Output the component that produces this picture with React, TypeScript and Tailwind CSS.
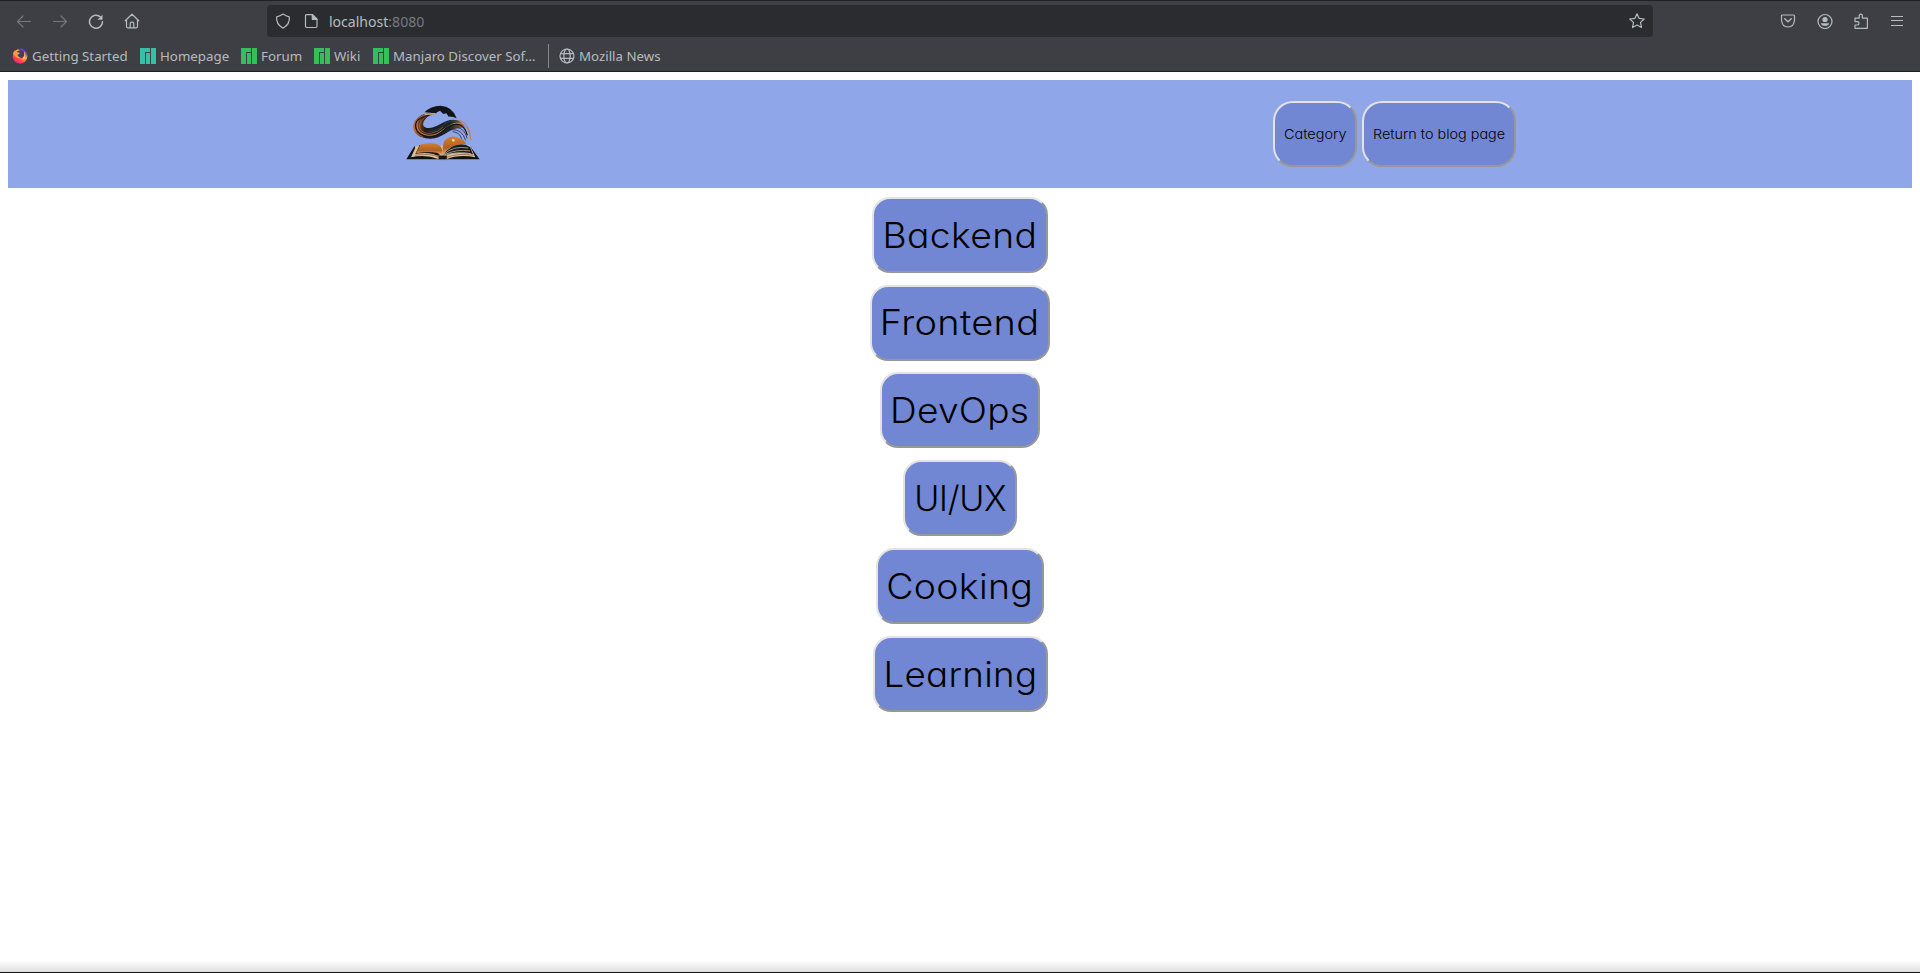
import React from "react";

const outset =
  "flex items-center justify-center border-2 border-t-[#e3e3e3] border-l-[#e3e3e3] border-r-[#979797] border-b-[#979797] bg-[#7287d3] text-black whitespace-nowrap font-[Inter,sans-serif] [font-feature-settings:'cv11','ss03']";

const categories = [
  { name: "Backend", box: "w-[176px]", text: "tracking-[0.4px] scale-x-[1.063]" },
  { name: "Frontend", box: "w-[180px]", text: "tracking-[0.3px] scale-x-[1.084]" },
  { name: "DevOps", box: "w-[160px]", text: "tracking-[0.2px] scale-x-[1.06]" },
  { name: "UI/UX", box: "w-[114px]", text: "tracking-[-0.3px] scale-x-[0.975]" },
  { name: "Cooking", box: "w-[168px]", text: "tracking-[0.3px] scale-x-[1.07]" },
  { name: "Learning", box: "w-[175px]", text: "tracking-[0.3px] scale-x-[1.048]" },
];

function Icon({ children, className = "" }: { children: React.ReactNode; className?: string }) {
  return (
    <svg
      viewBox="0 0 16 16"
      className={`h-4 w-4 shrink-0 ${className}`}
      fill="none"
      stroke="currentColor"
      strokeWidth="1.2"
      strokeLinecap="round"
      strokeLinejoin="round"
    >
      {children}
    </svg>
  );
}

function Firefox() {
  return (
    <svg viewBox="0 0 16 16" className="h-4 w-4 shrink-0">
      <defs>
        <linearGradient id="fox" x1="0.8" y1="0.1" x2="0.2" y2="0.9">
          <stop offset="0" stopColor="#ffdf50" />
          <stop offset="0.45" stopColor="#ff8a45" />
          <stop offset="0.75" stopColor="#ff4055" />
          <stop offset="1" stopColor="#e52878" />
        </linearGradient>
      </defs>
      <circle cx="8" cy="8.4" r="7.3" fill="url(#fox)" />
      <path d="M6 1.2Q11-1 14 3.5Q16 7 13.5 10Q13 6 10 4Z" fill="#7139d8" />
      <path d="M12.5 4Q14.5 7 13 11L10.5 12Q12.5 8 10 4.5Z" fill="#ffc34c" />
      <circle cx="8.4" cy="6.1" r="3.9" fill="#453b68" />
      <path d="M1 5L3 2.2L5 4.1L8 5Q7 6.5 5.3 6.8Q6 9 8.6 9.8Q4 11.5 1 5Z" fill="#ff9a42" />
    </svg>
  );
}

function Manjaro({ className }: { className: string }) {
  return (
    <svg viewBox="0 0 16 16" className={`h-4 w-4 shrink-0 ${className}`} fill="currentColor">
      <path d="M0 0H10V4H5V16H0ZM6 5H10V16H6ZM11 0H16V16H11Z" />
    </svg>
  );
}

function Globe() {
  return (
    <Icon>
      <circle cx="8" cy="8" r="7" />
      <ellipse cx="8" cy="8" rx="3.2" ry="7" />
      <path d="M1.5 5.7H14.5M1.5 10.3H14.5" />
    </Icon>
  );
}

function Bookmark({ icon, label, width }: { icon: React.ReactNode; label: string; width: string }) {
  return (
    <div className={`flex shrink-0 items-center gap-1 ${width}`}>
      {icon}
      <span className="whitespace-nowrap">{label}</span>
    </div>
  );
}

function BookLogo() {
  return (
    <svg viewBox="48 45 225 168" className="mb-[2px] h-14 w-[75px]" fill="none">
      <defs>
        <linearGradient id="page" x1="0" y1="0" x2="0" y2="1">
          <stop offset="0" stopColor="#d57f2f" />
          <stop offset="0.6" stopColor="#b06024" />
          <stop offset="1" stopColor="#dfb47b" />
        </linearGradient>
        <linearGradient id="swirl" x1="0" y1="0" x2="1" y2="0">
          <stop offset="0" stopColor="#c7702d" />
          <stop offset="0.22" stopColor="#241b1a" />
          <stop offset="0.7" stopColor="#17252c" />
          <stop offset="1" stopColor="#b97040" />
        </linearGradient>
      </defs>
      <path d="M104 67Q122 47 151 47Q188 49 200 85Q188 79 176 80L169 70L160 72L150 62L141 67L137 72L122 68Z" fill="#11151b" />
      <path
        d="M137 69Q91 66 74 94C59 125 85 146 120 146C157 147 169 121 202 115Q225 111 228 118C220 104 215 93 196 90C164 86 145 114 118 114C97 114 94 101 107 86Q117 74 137 72Z"
        fill="url(#swirl)"
      />
      <path d="M132 71Q85 72 81 99C77 133 115 142 139 132C164 121 181 94 213 100Q238 109 243 150" stroke="#c67d45" strokeWidth="3" />
      <path d="M119 73Q73 84 77 111Q81 139 121 141Q146 139 160 122Q183 97 211 105Q226 113 232 136" stroke="#161517" strokeWidth="3.5" />
      <path d="M112 74Q75 83 72 105Q73 130 98 140M109 80Q86 94 89 115Q99 133 124 130Q145 126 160 111" stroke="#b96b31" strokeWidth="2" />
      <path d="M200 90Q231 91 241 132" stroke="#b97850" strokeWidth="2.5" />
      <path d="M117 124Q143 124 158 106Q180 87 205 94" stroke="#27434d" strokeWidth="2.5" />
      <path d="M185 119Q216 117 227 151M188 125Q209 127 215 146M200 112Q225 116 231 145" stroke="#2a3342" strokeWidth="2.5" />
      <path d="M137 71L104 73" stroke="#e5b873" strokeWidth="4" />
      <path d="M74 167L49 208H144L146 199L78 197ZM238 166L269 208H172L168 197L247 195Z" fill="#111216" />
      <path d="M78 169L63 202Q107 192 147 208L158 201L169 208Q208 192 256 202L239 165Z" fill="#dfc096" />
      <path d="M89 165L76 192Q119 183 154 202Q142 176 89 165Z" fill="#1d1714" />
      <path d="M91 164Q125 153 148 166Q158 172 158 196Q132 180 78 190Z" fill="url(#page)" />
      <path d="M159 196Q156 166 164 151Q183 132 206 144Q226 149 228 163Q180 159 159 196Z" fill="url(#page)" />
      <path d="M160 196Q184 157 228 165L240 171L249 193Q193 182 161 199Z" fill="#17191b" />
      <path d="M162 193Q190 166 235 174M162 195Q199 176 240 183M162 197Q198 183 244 191" stroke="#e5d2ad" strokeWidth="2" />
      <path d="M75 196Q118 188 150 202M250 196Q207 188 169 202" stroke="#7b5633" strokeWidth="2" />
      <path d="M145 196H171V209H145Z" fill="#171413" stroke="#c4793a" strokeWidth="2" />
      <circle cx="190" cy="151" r="4" fill="#ffe281" />
    </svg>
  );
}

export default function App() {
  return (
    <div className="flex h-[973px] w-full flex-col overflow-hidden bg-white">
      <div className="flex h-[72px] shrink-0 flex-col border-t border-b border-[#202027] bg-[#3e3f44] font-['Noto_Sans',sans-serif] text-[#b5bcbe]">
        <div className="flex h-10 items-center pt-[2px] pb-[2px]">
          <div className="flex w-[267px] items-center gap-5 pl-4">
            <Icon className="text-[#74777b]"><path d="M1.5 8.5H14.5M7 3L1.5 8.5L7 14" /></Icon>
            <Icon className="text-[#74777b]"><path d="M1.5 8.5H14.5M9 3L14.5 8.5L9 14" /></Icon>
            <Icon>
              <path d="M12.5 4A6.5 6.5 0 1 0 14.5 8.7" strokeWidth="1.5" />
              <path d="M14.5 1.7V6.7H9.5Z" fill="currentColor" stroke="none" />
            </Icon>
            <Icon>
              <path d="M1.2 7.8L8 1.2L14.8 7.8M2.5 6.8V13.6Q2.5 14.8 3.7 14.8H12.3Q13.5 14.8 13.5 13.6V6.8M6.2 14.5V10.5Q6.2 9.2 8 9.2Q9.8 9.2 9.8 10.5V14.5" />
            </Icon>
          </div>
          <div className="flex h-8 w-[1386px] items-center rounded-[4px] bg-[#2b2c30] pr-2 pl-2">
            <Icon><path d="M8 1Q11 3.2 14.3 3.8Q15.2 11.2 8 15.2Q0.8 11.2 1.7 3.8Q5 3.2 8 1Z" /></Icon>
            <Icon className="ml-3">
              <path d="M3.5 1.7H9.5L14 6.2V13.3Q14 14.5 12.8 14.5H3.7Q2.5 14.5 2.5 13.3V2.7Q2.5 1.7 3.5 1.7Z" />
              <path d="M9.3 1.8V6.3H14Z" fill="currentColor" />
            </Icon>
            <span className="ml-[10px] pt-px text-[14.05px] leading-5">localhost<span className="text-[#777b7f]">:8080</span></span>
            <Icon className="ml-auto"><path d="M8 .8L10.1 5.4L15.2 6L11.5 9.4L12.5 14.5L8 12L3.5 14.5L4.5 9.4L.8 6L5.9 5.4Z" /></Icon>
          </div>
          <div className="flex flex-1 items-center gap-5 pl-[127px]">
            <Icon>
              <path d="M2.4 2H13.6Q14.5 2 14.5 3V7Q14 14 8 14Q2 14 1.5 7V3Q1.5 2 2.4 2Z" />
              <path d="M4.7 5.8L8 8.8L11.3 5.8" strokeWidth="1.4" />
            </Icon>
            <Icon className="ml-[0.5px]">
              <circle cx="8" cy="8.5" r="7" />
              <circle cx="8" cy="6.5" r="2.6" fill="currentColor" stroke="none" />
              <path d="M3.8 10.3H12.2Q11.5 12.9 8 12.9Q4.5 12.9 3.8 10.3Z" fill="currentColor" stroke="none" />
            </Icon>
            <Icon>
              <path d="M2 15.3V12H4.5Q6 12 6 10.3Q6 8.6 4.5 8.6H2V5.2H6.2V3Q6.2 1.2 7.8 1.2Q9.4 1.2 9.4 3V5.2H14.4V15.3Z" />
            </Icon>
            <Icon><path d="M2 3.5H14M2 7.5H14M2 12.5H14" strokeLinecap="butt" /></Icon>
          </div>
        </div>
        <div className="flex h-[30px] items-center pl-3 text-[13.3px] leading-5">
          <Bookmark icon={<Firefox />} label="Getting Started" width="w-[128px]" />
          <Bookmark icon={<Manjaro className="text-[#35bfa4]" />} label="Homepage" width="w-[101px]" />
          <Bookmark icon={<Manjaro className="text-[#35bf5c]" />} label="Forum" width="w-[73px]" />
          <Bookmark icon={<Manjaro className="text-[#35bf5c]" />} label="Wiki" width="w-[59px]" />
          <Bookmark icon={<Manjaro className="text-[#35bf5c]" />} label="Manjaro Discover Sof…" width="w-[175px]" />
          <span className="h-6 w-px bg-[#85888b]" />
          <div className="ml-[10px] flex items-center"><Bookmark icon={<Globe />} label="Mozilla News" width="w-[110px]" /></div>
        </div>
      </div>

      <header className="mx-2 mt-2 flex h-[108px] shrink-0 items-center justify-between bg-[#8fa6e8] pr-[396px] pl-[398px]">
        <BookLogo />
        <nav className="flex gap-[5px] text-[13.5px] font-light">
          <button className={`${outset} h-[66px] w-[84px] rounded-[20px]`}><span className="scale-x-[1.07]">Category</span></button>
          <button className={`${outset} h-[66px] w-[154px] rounded-[20px]`}><span className="scale-x-[1.065]">Return to blog page</span></button>
        </nav>
      </header>

      <main className="flex flex-1 flex-col items-center gap-[11.8px] pt-[8.8px]">
        {categories.map((category) => (
          <button key={category.name} className={`${outset} h-[76px] shrink-0 rounded-[18px] text-[35px] font-light ${category.box}`}>
            <span className={category.text}>{category.name}</span>
          </button>
        ))}
      </main>
      <div className="h-3 shrink-0 border-b border-[#111] bg-linear-to-b from-white to-[#dedede]" />
    </div>
  );
}
